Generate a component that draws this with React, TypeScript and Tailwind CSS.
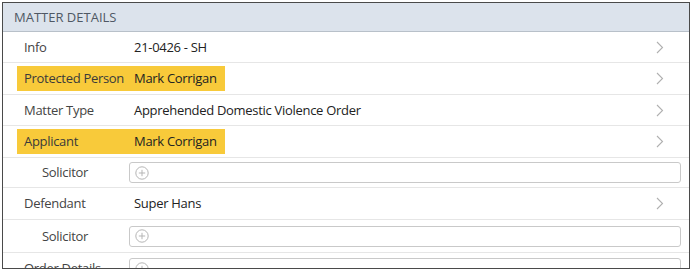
import React from "react";

const Chevron = () => (
  <svg width="8" height="13" viewBox="0 0 8 13" className="shrink-0">
    <path d="M1 1 L6.5 6.5 L1 12" fill="none" stroke="#b0b0b0" strokeWidth="1.1" />
  </svg>
);

const PlusCircle = () => (
  <svg width="14" height="14" viewBox="0 0 14 14">
    <circle cx="7" cy="7" r="6.2" fill="none" stroke="#b5b5b5" strokeWidth="1" />
    <path d="M7 3.8 V10.2 M3.8 7 H10.2" stroke="#b5b5b5" strokeWidth="1" />
  </svg>
);

type RowProps = {
  label: string;
  value?: string;
  highlight?: boolean;
  indent?: boolean;
  input?: boolean;
  h: string;
};

const Row = ({ label, value, highlight, indent, input, h }: RowProps) => (
  <div className={`flex items-center border-b border-[#e6e6e6] ${h}`}>
    {input ? (
      <>
        <div className={`w-[126px] shrink-0 text-[#444] ${indent ? "pl-[39px]" : "pl-[21px]"}`}>{label}</div>
        <div className="flex h-[21px] flex-1 items-center rounded-[3px] border border-[#c9c9c9] pl-[5px] mr-[8px]">
          <PlusCircle />
        </div>
      </>
    ) : (
      <>
        <div className={`flex h-[25px] items-center ${highlight ? "bg-[#f8ca3a] ml-[14px] w-[208px] pl-[7px]" : "ml-[14px] w-[208px] pl-[7px]"}`}>
          <div className={`w-[110px] shrink-0 ${highlight ? "text-[#3a3a3a]" : "text-[#444]"}`}>{label}</div>
          <div className="whitespace-nowrap text-[#222]">{value}</div>
        </div>
        <div className="flex-1" />
        <div className="mr-[25px]">
          <Chevron />
        </div>
      </>
    )}
  </div>
);

export default function App() {
  return (
    <div className="bg-white p-[2px] w-[693px] h-[273px]" style={{ fontFamily: '"Open Sans", "Noto Sans", sans-serif' }}>
      <div className="h-[267px] w-[688px] overflow-hidden border border-[#4a4a4a] text-[13px] leading-none tracking-[-0.3px]">
        <div className="flex h-[29px] items-center border-b border-[#b8c0c9] bg-[#dce3ec] pl-[11px] text-[13px] tracking-normal text-[#4f5864]">
          MATTER DETAILS
        </div>
        <Row label="Info" value="21-0426 - SH" h="h-[31px]" />
        <Row label="Protected Person" value="Mark Corrigan" highlight h="h-[32px]" />
        <Row label="Matter Type" value="Apprehended Domestic Violence Order" h="h-[31px]" />
        <Row label="Applicant" value="Mark Corrigan" highlight h="h-[32px]" />
        <Row label="Solicitor" indent input h="h-[30px]" />
        <Row label="Defendant" value="Super Hans" h="h-[32px]" />
        <Row label="Solicitor" indent input h="h-[33px]" />
        <Row label="Order Details" input h="h-[32px]" />
      </div>
    </div>
  );
}
